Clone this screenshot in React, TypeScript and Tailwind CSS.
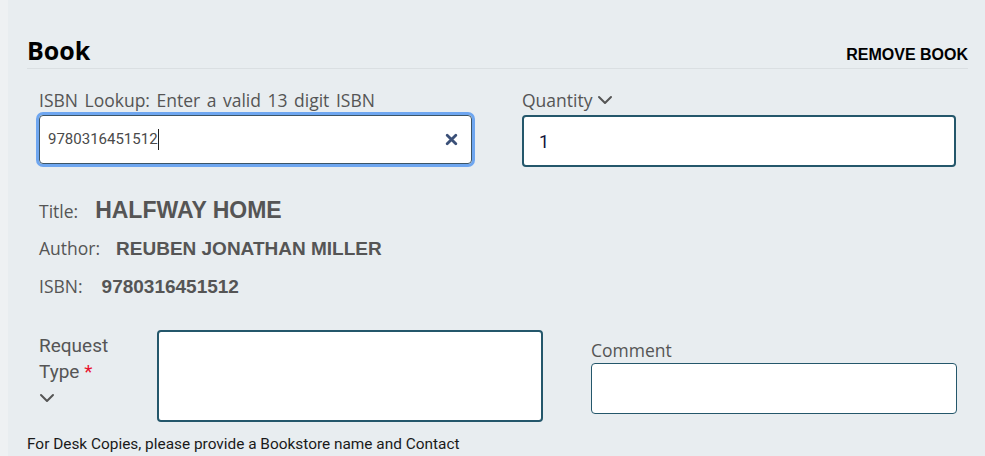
import React from "react";

function Chevron({ className = "" }: { className?: string }) {
  return (
    <svg className={className} width="16" height="10" viewBox="0 0 16 10" fill="none">
      <path d="M2 2l6 6 6-6" stroke="#555" strokeWidth="2" strokeLinecap="round" strokeLinejoin="round" />
    </svg>
  );
}

const arial = { fontFamily: '"Liberation Sans", Arial, sans-serif' };
const roboto = { fontFamily: 'Roboto, sans-serif' };

export default function App() {
  return (
    <div className="w-[985px] h-[456px] overflow-hidden bg-[#eef1f3] flex" style={{ fontFamily: '"Open Sans", sans-serif' }}>
      <div className="ml-[8px] flex-1 bg-[#e8edf0] pl-[19px] pr-[17px] pt-[35px]">
        <div className="flex items-end justify-between border-b border-[#dadfe2] pb-[3px]">
          <h1 className="text-[25px] font-bold text-black leading-[30px]">Book</h1>
          <span className="text-[16px] font-bold text-black leading-[18px] mb-[1px]" style={arial}>REMOVE BOOK</span>
        </div>

        <div className="flex pl-[12px] mt-[20px]">
          <div className="w-[436px]">
            <div className="text-[17.5px] text-[#555] leading-[22px] [word-spacing:2px]">ISBN Lookup: Enter a valid 13 digit ISBN</div>
            <div className="mt-[1px] h-[55px] rounded-[7px] border-[3px] border-[#6ea6f0] -ml-[3px]">
              <div className="h-full rounded-[4px] border border-[#3c5566] bg-white flex items-center pl-[8px] pr-[13px]">
                <span className="text-[15px] text-[#4a4a4a]" style={roboto}>9780316451512</span>
                <span className="w-[1.5px] h-[21px] bg-[#222]"></span>
                <span className="ml-auto">
                  <svg width="13" height="13" viewBox="0 0 12 12"><path d="M2 2l8 8M10 2l-8 8" stroke="#3b5078" strokeWidth="2.6" strokeLinecap="round" /></svg>
                </span>
              </div>
            </div>
          </div>
          <div className="ml-[47px] w-[434px]">
            <div className="flex items-center gap-[5px] text-[17.5px] text-[#555] leading-[22px]">
              Quantity <Chevron />
            </div>
            <div className="mt-[4px] h-[52px] rounded-[4px] border-2 border-[#24576b] bg-white flex items-center pl-[15px]">
              <span className="text-[18px] text-[#14143a]" style={roboto}>1</span>
            </div>
          </div>
        </div>

        <div className="pl-[12px] mt-[31px] flex flex-col text-[#555]">
          <div className="flex items-baseline h-[38px]">
            <span className="text-[17.5px] leading-[24px]">Title:</span>
            <span className="ml-[17px] text-[23px] font-bold leading-[24px]" style={arial}>HALFWAY HOME</span>
          </div>
          <div className="flex items-baseline h-[38px]">
            <span className="text-[17.5px] leading-[24px]">Author:</span>
            <span className="ml-[16px] text-[19px] font-bold leading-[24px]" style={arial}>REUBEN JONATHAN MILLER</span>
          </div>
          <div className="flex items-baseline h-[38px]">
            <span className="text-[17.5px] leading-[24px]">ISBN:</span>
            <span className="ml-[19px] text-[19px] font-bold leading-[24px]" style={arial}>9780316451512</span>
          </div>
        </div>

        <div className="flex pl-[12px] mt-[18px]">
          <div className="w-[118px] pt-[3px] text-[19px] text-[#555] leading-[26px]" style={roboto}>
            <div>Request</div>
            <div>Type <span className="text-[#e8112d]">*</span></div>
            <Chevron className="mt-[8px]" />
          </div>
          <div className="w-[386px] h-[92px] rounded-[4px] border-2 border-[#24576b] bg-white"></div>
          <div className="ml-[48px] w-[366px] pt-[8px]">
            <div className="text-[17.5px] text-[#555] leading-[24px]">Comment</div>
            <div className="mt-[1px] h-[51px] rounded-[4px] border border-[#24576b] bg-white"></div>
          </div>
        </div>

        <div className="mt-[11px] text-[15.4px] text-[#1a1a1a]" style={roboto}>
          For Desk Copies, please provide a Bookstore name and Contact
        </div>
      </div>
    </div>
  );
}
